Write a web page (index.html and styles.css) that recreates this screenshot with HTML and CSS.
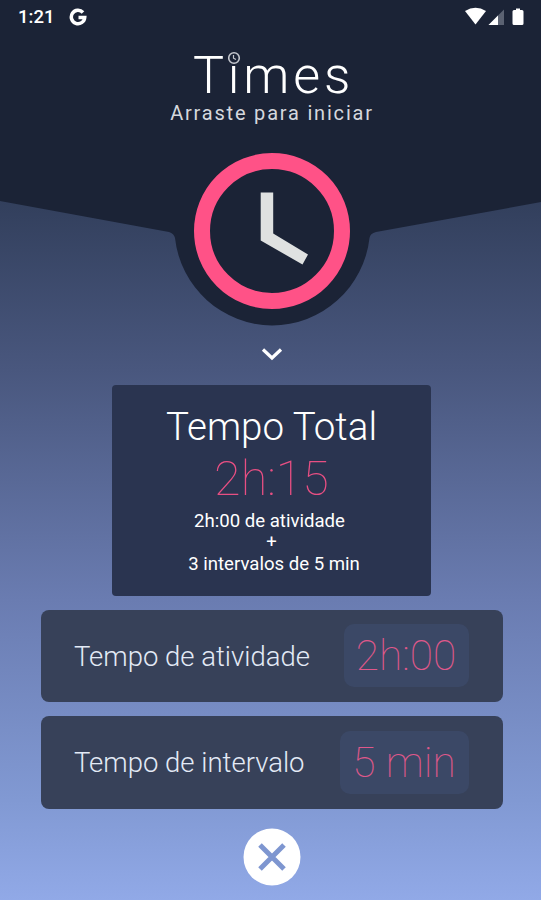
FILE: index.html
```html
<!DOCTYPE html>
<html lang="pt-BR">
<head>
    <meta charset="UTF-8">
    <meta name="viewport" content="width=device-width, initial-scale=1.0">
    <title>Times</title>
    <link rel="stylesheet" href="styles.css">
</head>
<body>
    <div class="screen">
        <div class="header">
            <svg class="header-shape" viewBox="0 0 541 330">
                <path d="M0 0H541V202L376 232Q370 233.500 369.500 238A98.500 98.500 0 0 1 272 325.500A98.500 98.500 0 0 1 175 238Q174 233.500 169 232L0 201Z" fill="#1b2336"/>
            </svg>

            <div class="status-bar">
                <span class="time">1:21</span>
                <svg class="google" viewBox="0 0 18 18">
                    <path d="M14 4.500A6.700 6.700 0 1 0 15.700 9.600H9.500" fill="none" stroke="#fff" stroke-width="3.500"/>
                </svg>
                <svg class="signals" viewBox="0 0 62 20">
                    <path d="M1 4Q11.500 -2.500 22 4L11.500 17.500Z" fill="#fff"/>
                    <path d="M40 2.500V18H24.500Z" fill="#5b6272"/>
                    <path d="M34 8.500V18H24.500Z" fill="#fff"/>
                    <path d="M52 1.500h4v1.500h2q1.500 0 1.500 1.500v12q0 1.500-1.500 1.500h-8q-1.500 0-1.500-1.500v-12q0-1.500 1.500-1.500h2z" fill="#fff"/>
                </svg>
            </div>

            <h1>T<span class="letter-i">i<svg class="dot-clock" viewBox="0 0 14 14">
                <circle cx="7" cy="7" r="5.300" fill="#1b2336" stroke="#c4c7ce" stroke-width="1.600"/>
                <path d="M6.500 4V7.200L9 8.600" fill="none" stroke="#c4c7ce" stroke-width="1.200"/>
            </svg></span>mes</h1>
            <p class="subtitle">Arraste para iniciar</p>

            <svg class="clock" viewBox="0 0 156 156">
                <circle cx="78" cy="78" r="70" fill="none" stroke="#ff5287" stroke-width="16"/>
                <path d="M66.700 39.500H79.200V80.500L114 101.500L108.500 111.500L66.700 87.500Z" fill="#dfe1e1"/>
            </svg>
        </div>

        <svg class="chevron" viewBox="0 0 22 14">
            <path d="M2 2.500L11 11L20 2.500" fill="none" stroke="#fff" stroke-width="3.200"/>
        </svg>

        <div class="total">
            <h2>Tempo Total</h2>
            <div class="total-time">2h:15</div>
            <p class="total-activity">2h:00 de atividade</p>
            <p>+</p>
            <p class="total-interval">3 intervalos de 5 min</p>
        </div>

        <div class="row">
            <span class="row-label">Tempo de atividade</span>
            <span class="row-value activity">2h:00</span>
        </div>
        <div class="row">
            <span class="row-label">Tempo de intervalo</span>
            <span class="row-value interval">5 min</span>
        </div>

        <svg class="close" viewBox="0 0 58 58">
            <circle cx="29" cy="29" r="28.500" fill="#fff"/>
            <path d="M17 17L41 41M41 17L17 41" stroke="#7e96d0" stroke-width="5"/>
        </svg>
    </div>
</body>
</html>
```
FILE: styles.css
```css
body {
    font-family: Roboto, "Liberation Sans", sans-serif;
    margin: 0;
    color: #fff;
}
.screen {
    display: flex;
    flex-direction: column;
    align-items: center;
    width: 541px;
    height: 900px;
    overflow: hidden;
    background: linear-gradient(#1f2942 0, #323f5c 200px, #49577e 370px, #6a7cb1 600px, #8199d3 800px, #91a9e7 900px);
}
h1, h2, p {
    margin: 0;
}
.header {
    position: relative;
    display: flex;
    flex-direction: column;
    align-items: center;
    width: 541px;
    height: 330px;
}
.header-shape {
    position: absolute;
    top: 0;
    left: 0;
    width: 541px;
    height: 330px;
}
.status-bar {
    position: relative;
    display: flex;
    align-items: center;
    box-sizing: border-box;
    width: 100%;
    height: 34px;
    padding: 0 15px 0 18px;
}
.time {
    width: 51px;
    font-size: 18.500px;
    font-weight: 500;
}
.google {
    width: 18px;
    height: 18px;
}
.signals {
    width: 62px;
    height: 20px;
    margin-left: auto;
}
h1 {
    position: relative;
    height: 50px;
    margin-top: 17px;
    padding-left: 6px;
    font-size: 52px;
    line-height: 50px;
    font-weight: 300;
    letter-spacing: 3.800px;
}
.letter-i {
    position: relative;
}
.dot-clock {
    position: absolute;
    left: -1px;
    top: 6px;
    width: 14px;
    height: 14px;
}
.subtitle {
    position: relative;
    height: 24px;
    padding-left: 3px;
    font-size: 20px;
    line-height: 24px;
    letter-spacing: 1.8px;
    color: #d5d8de;
}
.clock {
    position: relative;
    width: 156px;
    height: 156px;
    margin: 28px 0 0 3px;
}
.chevron {
    flex: none;
    width: 22px;
    height: 14px;
    margin: 17px 0 23.500px 2px;
}
.total {
    flex: none;
    box-sizing: border-box;
    width: 319px;
    height: 211px;
    margin: 0 0 14px 2px;
    padding-top: 18px;
    border-radius: 4px;
    background-color: #2a3450;
    text-align: center;
}
.total h2 {
    font-size: 38.500px;
    line-height: 48px;
    font-weight: 300;
}
.total-time {
    margin-bottom: 4px;
    font-size: 48.500px;
    line-height: 56px;
    font-weight: 100;
    color: #e84f83;
}
.total p {
    font-size: 18.600px;
    line-height: 21.600px;
}
.total .total-activity {
    padding-right: 4px;
}
.total .total-interval {
    padding-left: 5px;
}
.row {
    flex: none;
    display: flex;
    align-items: center;
    justify-content: space-between;
    box-sizing: border-box;
    width: 462px;
    height: 92.500px;
    margin: 0 0 14px 2px;
    padding: 0 34px 0 33.500px;
    border-radius: 8px;
    background-color: #374159;
}
.row-label {
    padding-top: 1px;
    font-size: 27.500px;
    font-weight: 300;
    color: #e3eaf6;
}
.row-value {
    height: 63px;
    border-radius: 10px;
    background-color: #3b4866;
    font-size: 42.500px;
    line-height: 63px;
    font-weight: 100;
    color: #e0588b;
    text-align: center;
}
.activity {
    width: 125px;
}
.interval {
    width: 129px;
}
.close {
    flex: none;
    width: 58px;
    height: 58px;
    margin: 5px 0 0 2px;
}
```
